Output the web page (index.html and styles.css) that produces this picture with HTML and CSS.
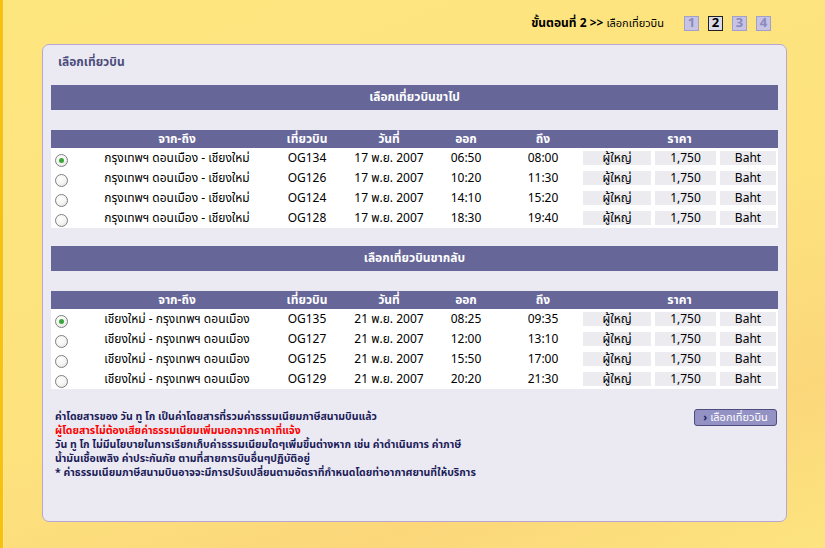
FILE: index.html
```html
<!DOCTYPE html>
<html lang="th">
<head>
    <meta charset="UTF-8">
    <title>เลือกเที่ยวบิน</title>
    <link rel="stylesheet" href="styles.css">
</head>
<body>
    <div class="page">
        <div class="steps">
            <b>ขั้นตอนที่ 2 &gt;&gt;</b>
            <span class="step-name">เลือกเที่ยวบิน</span>
            <span class="step">1</span>
            <span class="step current">2</span>
            <span class="step">3</span>
            <span class="step">4</span>
        </div>

        <div class="panel">
            <div class="panel-title">เลือกเที่ยวบิน</div>

            <div class="section-bar">เลือกเที่ยวบินขาไป</div>
            <table class="flights">
                <colgroup>
                    <col style="width:40px"><col style="width:172px"><col style="width:88px"><col style="width:76px">
                    <col style="width:78px"><col style="width:76px"><col style="width:72px"><col style="width:65px"><col style="width:60px">
                </colgroup>
                <tr class="head">
                    <th></th><th>จาก-ถึง</th><th>เที่ยวบิน</th><th>วันที่</th><th>ออก</th><th>ถึง</th><th colspan="3">ราคา</th>
                </tr>
                <tr>
                    <td class="pick"><span class="radio checked"></span></td>
                    <td>กรุงเทพฯ ดอนเมือง - เชียงใหม่</td><td>OG134</td><td>17 พ.ย. 2007</td><td>06:50</td><td>08:00</td>
                    <td><div class="box">ผู้ใหญ่</div></td><td><div class="box">1,750</div></td><td><div class="box">Baht</div></td>
                </tr>
                <tr>
                    <td class="pick"><span class="radio"></span></td>
                    <td>กรุงเทพฯ ดอนเมือง - เชียงใหม่</td><td>OG126</td><td>17 พ.ย. 2007</td><td>10:20</td><td>11:30</td>
                    <td><div class="box">ผู้ใหญ่</div></td><td><div class="box">1,750</div></td><td><div class="box">Baht</div></td>
                </tr>
                <tr>
                    <td class="pick"><span class="radio"></span></td>
                    <td>กรุงเทพฯ ดอนเมือง - เชียงใหม่</td><td>OG124</td><td>17 พ.ย. 2007</td><td>14:10</td><td>15:20</td>
                    <td><div class="box">ผู้ใหญ่</div></td><td><div class="box">1,750</div></td><td><div class="box">Baht</div></td>
                </tr>
                <tr>
                    <td class="pick"><span class="radio"></span></td>
                    <td>กรุงเทพฯ ดอนเมือง - เชียงใหม่</td><td>OG128</td><td>17 พ.ย. 2007</td><td>18:30</td><td>19:40</td>
                    <td><div class="box">ผู้ใหญ่</div></td><td><div class="box">1,750</div></td><td><div class="box">Baht</div></td>
                </tr>
            </table>

            <div class="section-bar">เลือกเที่ยวบินขากลับ</div>
            <table class="flights">
                <colgroup>
                    <col style="width:40px"><col style="width:172px"><col style="width:88px"><col style="width:76px">
                    <col style="width:78px"><col style="width:76px"><col style="width:72px"><col style="width:65px"><col style="width:60px">
                </colgroup>
                <tr class="head">
                    <th></th><th>จาก-ถึง</th><th>เที่ยวบิน</th><th>วันที่</th><th>ออก</th><th>ถึง</th><th colspan="3">ราคา</th>
                </tr>
                <tr>
                    <td class="pick"><span class="radio checked"></span></td>
                    <td>เชียงใหม่ - กรุงเทพฯ ดอนเมือง</td><td>OG135</td><td>21 พ.ย. 2007</td><td>08:25</td><td>09:35</td>
                    <td><div class="box">ผู้ใหญ่</div></td><td><div class="box">1,750</div></td><td><div class="box">Baht</div></td>
                </tr>
                <tr>
                    <td class="pick"><span class="radio"></span></td>
                    <td>เชียงใหม่ - กรุงเทพฯ ดอนเมือง</td><td>OG127</td><td>21 พ.ย. 2007</td><td>12:00</td><td>13:10</td>
                    <td><div class="box">ผู้ใหญ่</div></td><td><div class="box">1,750</div></td><td><div class="box">Baht</div></td>
                </tr>
                <tr>
                    <td class="pick"><span class="radio"></span></td>
                    <td>เชียงใหม่ - กรุงเทพฯ ดอนเมือง</td><td>OG125</td><td>21 พ.ย. 2007</td><td>15:50</td><td>17:00</td>
                    <td><div class="box">ผู้ใหญ่</div></td><td><div class="box">1,750</div></td><td><div class="box">Baht</div></td>
                </tr>
                <tr>
                    <td class="pick"><span class="radio"></span></td>
                    <td>เชียงใหม่ - กรุงเทพฯ ดอนเมือง</td><td>OG129</td><td>21 พ.ย. 2007</td><td>20:20</td><td>21:30</td>
                    <td><div class="box">ผู้ใหญ่</div></td><td><div class="box">1,750</div></td><td><div class="box">Baht</div></td>
                </tr>
            </table>

            <div class="footer">
                <div class="notes">
                    <p>ค่าโดยสารของ วัน ทู โก เป็นค่าโดยสารที่รวมค่าธรรมเนียมภาษีสนามบินแล้ว</p>
                    <p class="warn">ผู้โดยสารไม่ต้องเสียค่าธรรมเนียมเพิ่มนอกจากราคาที่แจ้ง</p>
                    <p>วัน ทู โก ไม่มีนโยบายในการเรียกเก็บค่าธรรมเนียมใดๆเพิ่มขึ้นต่างหาก เช่น ค่าดำเนินการ ค่าภาษี</p>
                    <p>น้ำมันเชื้อเพลิง ค่าประกันภัย ตามที่สายการบินอื่นๆปฏิบัติอยู่</p>
                    <p>* ค่าธรรมเนียมภาษีสนามบินอาจจะมีการปรับเปลี่ยนตามอัตราที่กำหนดโดยท่าอากาศยานที่ให้บริการ</p>
                </div>
                <button class="select-btn"><span class="arrow">›</span> เลือกเที่ยวบิน</button>
            </div>
        </div>
    </div>
</body>
</html>
```

FILE: styles.css
```css
* {
    margin: 0;
    padding: 0;
    box-sizing: border-box;
}

body {
    font-family: Tahoma, "Noto Sans Thai", "Liberation Sans", sans-serif;
    font-size: 12px;
    color: #000;
    min-height: 548px;
    background:
        linear-gradient(to right, #f8c20c 0, #f8c20c 3px, #fbe6a0 3px, #fbe6a0 4px, transparent 4px),
        linear-gradient(160deg, #fee67f 0%, #fde27e 55%, #fbd77a 80%, #fde47f 100%);
}

.page {
    width: 825px;
    padding-left: 42px;
}

.steps {
    height: 44px;
    width: 745px;
    display: flex;
    align-items: center;
    justify-content: flex-end;
    padding-right: 16px;
    padding-top: 2px;
}

.steps b {
    font-size: 12px;
    margin-right: 3px;
}

.step-name {
    font-size: 11px;
    margin-right: 11px;
}

.step {
    display: inline-block;
    width: 15px;
    height: 15px;
    margin-left: 9px;
    background: #c6c4e2;
    border: 1px solid #a19fcc;
    color: #8b89c0;
    font-weight: bold;
    font-size: 13px;
    line-height: 13px;
    text-align: center;
}

.step:first-of-type {
    margin-left: 0;
}

.step.current {
    background: #dcdbea;
    border-color: #222;
    color: #000;
}

.panel {
    width: 745px;
    height: 478px;
    background: #ebeaf2;
    border: 1px solid #b8a6d4;
    border-radius: 7px;
    padding: 10px 8px 0 8px;
}

.panel-title {
    font-weight: bold;
    font-size: 12px;
    color: #4c4c7c;
    height: 14px;
    line-height: 14px;
    padding-left: 7px;
    margin-bottom: 16px;
}

.section-bar {
    background: #666699;
    color: #fff;
    font-weight: bold;
    height: 25px;
    line-height: 25px;
    text-align: center;
    margin-bottom: 20px;
}

.flights {
    width: 727px;
    table-layout: fixed;
    border-collapse: collapse;
    background: #fff;
    margin-bottom: 18px;
}

.flights .head th {
    background: #666699;
    color: #fff;
    height: 18px;
    font-weight: bold;
    text-align: center;
    padding: 0;
}

.flights td {
    height: 20px;
    text-align: center;
    padding: 0;
    white-space: nowrap;
}

.flights td.pick {
    text-align: left;
    padding-left: 4px;
}

.box {
    background: #ebebf0;
    height: 14px;
    line-height: 14px;
    margin: 0 2px;
}

.radio {
    display: inline-block;
    width: 13px;
    height: 13px;
    border: 1px solid #7e8288;
    border-radius: 50%;
    background: radial-gradient(circle at 40% 35%, #fff 0, #f4f4f0 50%, #dcdcd8 100%);
    vertical-align: middle;
    margin-top: 4px;
    position: relative;
}

.radio.checked::after {
    content: "";
    position: absolute;
    left: 3px;
    top: 3px;
    width: 5px;
    height: 5px;
    border-radius: 50%;
    background: #3aa63a;
}

.footer {
    display: flex;
    justify-content: space-between;
    align-items: flex-start;
    padding-top: 3px;
}

.notes {
    padding-left: 4px;
    color: #1c1c5a;
    font-size: 10.5px;
    font-weight: bold;
    line-height: 14px;
}

.notes .warn {
    color: #ff0000;
}

.select-btn {
    margin-top: -1px;
    margin-right: 1px;
    width: 83px;
    height: 17px;
    background: #9492c4;
    border: 1px solid #4e4c7e;
    border-radius: 3px;
    color: #fff;
    font-family: Tahoma, "Noto Sans Thai", "Liberation Sans", sans-serif;
    font-size: 11px;
    line-height: 15px;
    text-align: center;
}

.select-btn .arrow {
    color: #1c1c5a;
    font-weight: bold;
}
```
